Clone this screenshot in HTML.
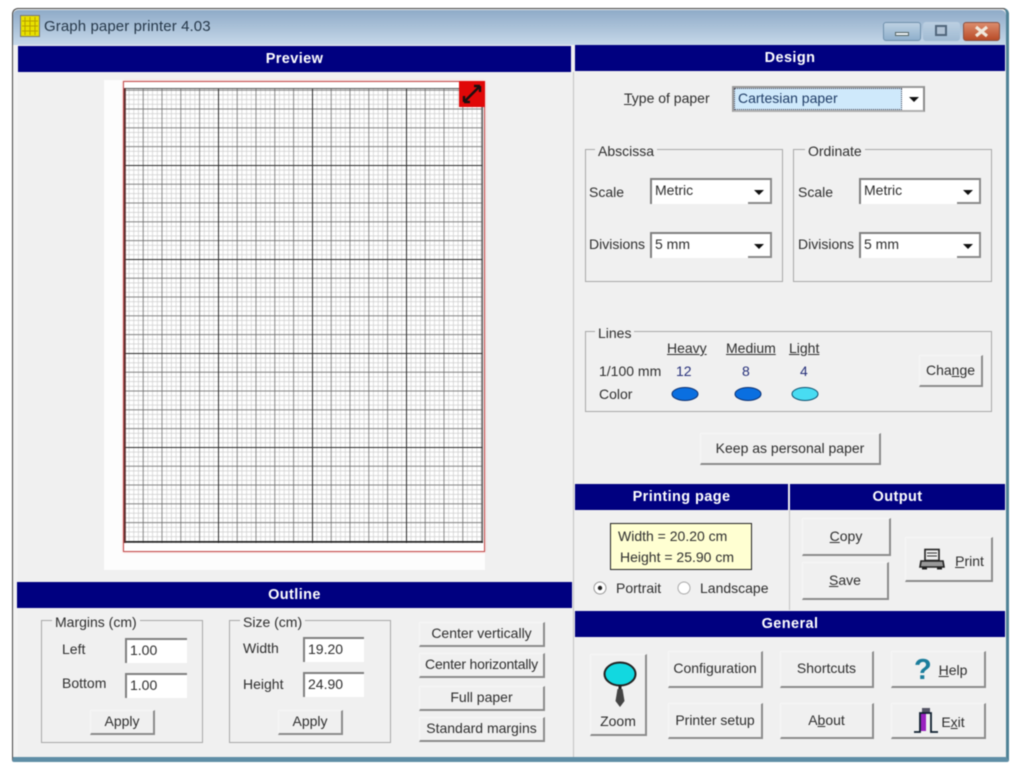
<!DOCTYPE html>
<html><head><meta charset="utf-8"><title>Graph paper printer 4.03</title>
<style>
html,body{margin:0;padding:0;background:#fff;width:1020px;height:771px;overflow:hidden}
#r{position:relative;width:1020px;height:771px;filter:blur(.5px);font:14px "Liberation Sans",sans-serif;color:#2e2e2e}
#r div,#r span,#r svg{position:absolute;box-sizing:border-box}
.t{white-space:nowrap;line-height:18px;margin-top:-9px}
.h{background:#000080;color:#fff;font-weight:bold;font-size:14.5px;letter-spacing:.4px;display:flex;align-items:center;justify-content:center;white-space:nowrap}
.b{background:#f0f0f0;border-top:1px solid #f7f7f7;border-left:1px solid #f7f7f7;border-right:2px solid #8c8c8c;border-bottom:2px solid #8c8c8c;display:flex;align-items:center;justify-content:center;white-space:nowrap;color:#2e2e2e;padding-bottom:2px}
.g{border:1px solid #a8a8a8}
.l{background:#f0f0f0;padding:0 3px;line-height:16px;white-space:nowrap}
.i{background:#fff;border-top:2px solid #808080;border-left:2px solid #808080;padding-left:3px;line-height:21px;color:#2e2e2e}
.c{background:#fff;border-top:2px solid #808080;border-left:2px solid #808080;border-right:2px solid #8c8c8c;padding-left:3px;line-height:20px}
.a{background:#fff;border-bottom:2px solid #8c8c8c;top:0;bottom:0;right:0;width:22px}
.a:after{content:"";position:absolute;left:6px;top:10px;border:5px solid transparent;border-top:5px solid #111;border-bottom:0}
u{text-decoration:underline}
</style></head><body><div id="r">
<!-- window -->
<div style="left:12px;top:8px;width:997px;height:754px;background:#f0f0f0;border:1px solid #444;border-right:3px solid #4f8296;border-bottom:5px solid #5f8ea6;border-radius:6px 6px 2px 2px"></div>
<div style="left:13px;top:10px;width:993px;height:35px;background:linear-gradient(#8fabc8,#c6d8e9);border-radius:5px 5px 0 0"></div>
<div style="left:14px;top:45px;width:4px;height:712px;background:#f3f3f3"></div>
<svg style="left:20px;top:15px" width="20" height="22"><rect x=".5" y=".5" width="19" height="21" fill="#e8e000" stroke="#777"/><path d="M5 2v18M10 2v18M15 2v18M2 6h16M2 11h16M2 16h16" stroke="#b8a000" fill="none"/></svg>
<span class="t" style="left:44px;top:27px;font-size:15px;letter-spacing:.1px;color:#26384a">Graph paper printer 4.03</span>
<!-- window buttons -->
<div style="left:883px;top:22px;width:38px;height:19px;background:linear-gradient(#bdd0e2,#8fb0cc);border:1px solid #6f90ac;border-radius:3px"></div>
<div style="left:895px;top:32px;width:14px;height:4px;background:#eef3f7;border:1px solid #566"></div>
<div style="left:923px;top:22px;width:37px;height:19px;background:linear-gradient(#bcd0e2,#a0bad2);border-radius:3px"></div>
<div style="left:935px;top:25px;width:12px;height:11px;border:2px solid #51667c;background:#b0c2d4"></div>
<div style="left:963px;top:22px;width:37px;height:19px;background:linear-gradient(#dc8c6c,#b84c28);border:1px solid #8a5040;border-radius:3px"></div>
<svg style="left:963px;top:22px" width="37" height="19"><path d="M13 5l11 9M24 5l-11 9" stroke="#f0e8dc" stroke-width="3.2" fill="none"/></svg>
<!-- headers -->
<div class="h" style="left:18px;top:46px;width:553px;height:26px">Preview</div>
<div class="h" style="left:575px;top:45px;width:430px;height:26px">Design</div>
<div class="h" style="left:17px;top:582px;width:555px;height:26px">Outline</div>
<div class="h" style="left:575px;top:484px;width:213px;height:26px">Printing page</div>
<div class="h" style="left:790px;top:484px;width:215px;height:26px">Output</div>
<div class="h" style="left:575px;top:611px;width:430px;height:26px">General</div>
<div style="left:573px;top:72px;width:1px;height:685px;background:#c4c4c4"></div>
<div style="left:789px;top:510px;width:1px;height:100px;background:#c4c4c4"></div>
<!-- preview -->
<div style="left:104px;top:80px;width:381px;height:490px;background:#fdfdfd"></div>
<div style="left:123px;top:81px;width:362px;height:471px;background:#fff;border:1px solid #c04848;box-shadow:0 0 2px #f4b0b0"></div>
<svg style="left:124px;top:88px" width="359" height="455" viewBox="0 0 359 455">
<defs>
<pattern id="p1" width="4.7" height="4.7" patternUnits="userSpaceOnUse" y="77"><path d="M0 0V4.7M0 0H4.7" stroke="#cbcbcb" stroke-width="1.3" fill="none"/></pattern>
<pattern id="p2" width="18.8" height="18.8" patternUnits="userSpaceOnUse" y="77"><path d="M0 0V18.8M0 0H18.8" stroke="#666" stroke-width="1.4" fill="none"/></pattern>
<pattern id="p3" width="94" height="94" patternUnits="userSpaceOnUse" y="77"><path d="M0 0V94M0 0H94" stroke="#2a2a2a" stroke-width="2" fill="none"/></pattern>
</defs>
<rect width="359" height="455" fill="#fff"/>
<rect width="359" height="455" fill="url(#p1)"/>
<rect width="359" height="455" fill="url(#p2)"/>
<rect width="359" height="455" fill="url(#p3)"/>
<path d="M0 .5H359M358.5 0V455" stroke="#555" stroke-width="1" fill="none"/>
<path d="M0 454H359" stroke="#222" stroke-width="1.5" fill="none"/>
<path d="M1 0V455" stroke="#5a2a2a" stroke-width="1.6" fill="none"/>
</svg>
<div style="left:459px;top:81px;width:26px;height:26px;background:#e00808"></div>
<svg style="left:459px;top:81px" width="26" height="26"><path d="M5 21L21 5M5 21v-6M5 21h6M21 5v6M21 5h-6" stroke="#1a1010" stroke-width="2.4" fill="none"/></svg>
<!-- design -->
<span class="t" style="left:624px;top:98px"><u>T</u>ype of paper</span>
<div style="left:732px;top:86px;width:193px;height:26px;border-top:2px solid #999;border-left:2px solid #999;border-right:2px solid #8c8c8c;background:#fff;border-bottom:2px solid #b0b0b0"></div>
<div style="left:734px;top:88px;width:168px;height:22px;background:#cfe9fb;border:1px dotted #445;color:#1f3c66;line-height:19px;padding-left:3px;white-space:nowrap">Cartesian paper</div>
<div style="left:909px;top:97px;border:5px solid transparent;border-top:5px solid #111;border-bottom:0"></div>

<div class="g" style="left:585px;top:149px;width:198px;height:133px"></div>
<span class="l" style="left:595px;top:143px">Abscissa</span>
<span class="t" style="left:589px;top:192px">Scale</span>
<div class="c" style="left:650px;top:178px;width:122px;height:26px">Metric<div class="a"></div></div>
<span class="t" style="left:589px;top:244px">Divisions</span>
<div class="c" style="left:650px;top:232px;width:122px;height:26px">5 mm<div class="a"></div></div>

<div class="g" style="left:793px;top:149px;width:199px;height:133px"></div>
<span class="l" style="left:805px;top:143px">Ordinate</span>
<span class="t" style="left:798px;top:192px">Scale</span>
<div class="c" style="left:859px;top:178px;width:122px;height:26px">Metric<div class="a"></div></div>
<span class="t" style="left:798px;top:244px">Divisions</span>
<div class="c" style="left:859px;top:232px;width:122px;height:26px">5 mm<div class="a"></div></div>

<div class="g" style="left:585px;top:331px;width:407px;height:81px"></div>
<span class="l" style="left:595px;top:325px">Lines</span>
<span class="t" style="left:667px;top:348px"><u>Heavy</u></span>
<span class="t" style="left:726px;top:348px"><u>Medium</u></span>
<span class="t" style="left:789px;top:348px"><u>Light</u></span>
<span class="t" style="left:599px;top:371px">1/100 mm</span>
<span class="t" style="left:676px;top:371px;color:#26307a">12</span>
<span class="t" style="left:742px;top:371px;color:#26307a">8</span>
<span class="t" style="left:800px;top:371px;color:#26307a">4</span>
<span class="t" style="left:599px;top:394px">Color</span>
<svg style="left:670px;top:385px" width="150" height="18"><ellipse cx="15" cy="9" rx="13" ry="6.5" fill="#0a6fe0" stroke="#0c2f70"/><ellipse cx="78" cy="9" rx="13" ry="6.5" fill="#0a6fe0" stroke="#0c2f70"/><ellipse cx="135" cy="9" rx="13" ry="6.5" fill="#48dcf2" stroke="#0c5070"/></svg>
<div class="b" style="left:919px;top:355px;width:64px;height:32px">Cha<u>n</u>ge</div>
<div class="b" style="left:700px;top:433px;width:181px;height:32px">Keep as personal paper</div>
<!-- printing page -->
<div style="left:610px;top:523px;width:142px;height:47px;background:#ffffd2;border:1px solid #222"></div>
<span class="t" style="left:618px;top:536px">Width = 20.20 cm</span>
<span class="t" style="left:620px;top:557px">Height = 25.90 cm</span>
<svg style="left:592px;top:580px" width="105" height="17"><circle cx="8" cy="8" r="6" fill="#fff" stroke="#999"/><circle cx="8" cy="8" r="2.2" fill="#222"/><circle cx="92" cy="8" r="6" fill="#fff" stroke="#aaa"/></svg>
<span class="t" style="left:616px;top:588px">Portrait</span>
<span class="t" style="left:700px;top:588px">Landscape</span>
<!-- output -->
<div class="b" style="left:802px;top:518px;width:89px;height:38px"><u>C</u>opy</div>
<div class="b" style="left:802px;top:562px;width:87px;height:38px"><u>S</u>ave</div>
<div class="b" style="left:905px;top:537px;width:88px;height:45px;padding:3px 0 0 42px"><u>P</u>rint</div>
<svg style="left:919px;top:548px" width="26" height="23"><rect x="6" y="1.500" width="14" height="11" fill="#eee" stroke="#222" stroke-width="1.6"/><path d="M8 5h10M8 8h10" stroke="#333"/><path d="M2 13h22l1 6H1z" fill="#999" stroke="#222" stroke-width="1.6"/><rect x="3" y="19" width="5" height="2.500" fill="#222"/><rect x="18" y="19" width="5" height="2.500" fill="#222"/></svg>
<!-- general -->
<div class="b" style="left:590px;top:654px;width:57px;height:82px;align-items:flex-end;padding-bottom:5px">Zoom</div>
<svg style="left:600px;top:658px" width="40" height="52"><ellipse cx="20" cy="16" rx="15.5" ry="11.5" fill="#12d8e0" stroke="#222" stroke-width="2"/><path d="M20 28v4" stroke="#222" stroke-width="3"/><path d="M17.5 31h5l2 12-4.500 6-4.500-6z" fill="#444"/></svg>
<div class="b" style="left:668px;top:651px;width:95px;height:37px">Configuration</div>
<div class="b" style="left:780px;top:651px;width:94px;height:37px">Shortcuts</div>
<div class="b" style="left:891px;top:651px;width:95px;height:37px;padding:1px 0 0 30px"><u>H</u>elp</div>
<span class="t" style="left:914px;top:670px;font-size:29px;font-weight:bold;color:#1b7d9c;line-height:30px;margin-top:-15px">?</span>
<div class="b" style="left:668px;top:703px;width:95px;height:36px">Printer setup</div>
<div class="b" style="left:780px;top:703px;width:94px;height:36px">A<u>b</u>out</div>
<div class="b" style="left:891px;top:703px;width:95px;height:36px;padding:2px 0 0 30px">E<u>x</u>it</div>
<svg style="left:913px;top:706px" width="26" height="28"><rect x="9" y="2" width="8" height="5" fill="#556"/><rect x="7" y="7" width="6" height="18" fill="#9a20c0"/><path d="M1 26h6V7h11v19h7" fill="none" stroke="#102030" stroke-width="1.800"/></svg>
<!-- outline -->
<div class="g" style="left:41px;top:620px;width:162px;height:123px"></div>
<span class="l" style="left:52px;top:614px">Margins (cm)</span>
<span class="t" style="left:62px;top:649px">Left</span>
<div class="i" style="left:125px;top:638px;width:62px;height:25px">1.00</div>
<span class="t" style="left:62px;top:683px">Bottom</span>
<div class="i" style="left:125px;top:673px;width:62px;height:25px">1.00</div>
<div class="b" style="left:90px;top:710px;width:65px;height:25px">Apply</div>
<div class="g" style="left:229px;top:620px;width:162px;height:123px"></div>
<span class="l" style="left:240px;top:614px">Size (cm)</span>
<span class="t" style="left:243px;top:648px">Width</span>
<div class="i" style="left:303px;top:637px;width:61px;height:25px">19.20</div>
<span class="t" style="left:243px;top:684px">Height</span>
<div class="i" style="left:303px;top:672px;width:61px;height:25px">24.90</div>
<div class="b" style="left:278px;top:710px;width:65px;height:25px">Apply</div>
<div class="b" style="left:419px;top:622px;width:126px;height:25px">Center vertically</div>
<div class="b" style="left:419px;top:653px;width:126px;height:25px;letter-spacing:-.2px">Center horizontally</div>
<div class="b" style="left:419px;top:686px;width:126px;height:25px">Full paper</div>
<div class="b" style="left:419px;top:717px;width:126px;height:25px">Standard margins</div>
</div></body></html>
